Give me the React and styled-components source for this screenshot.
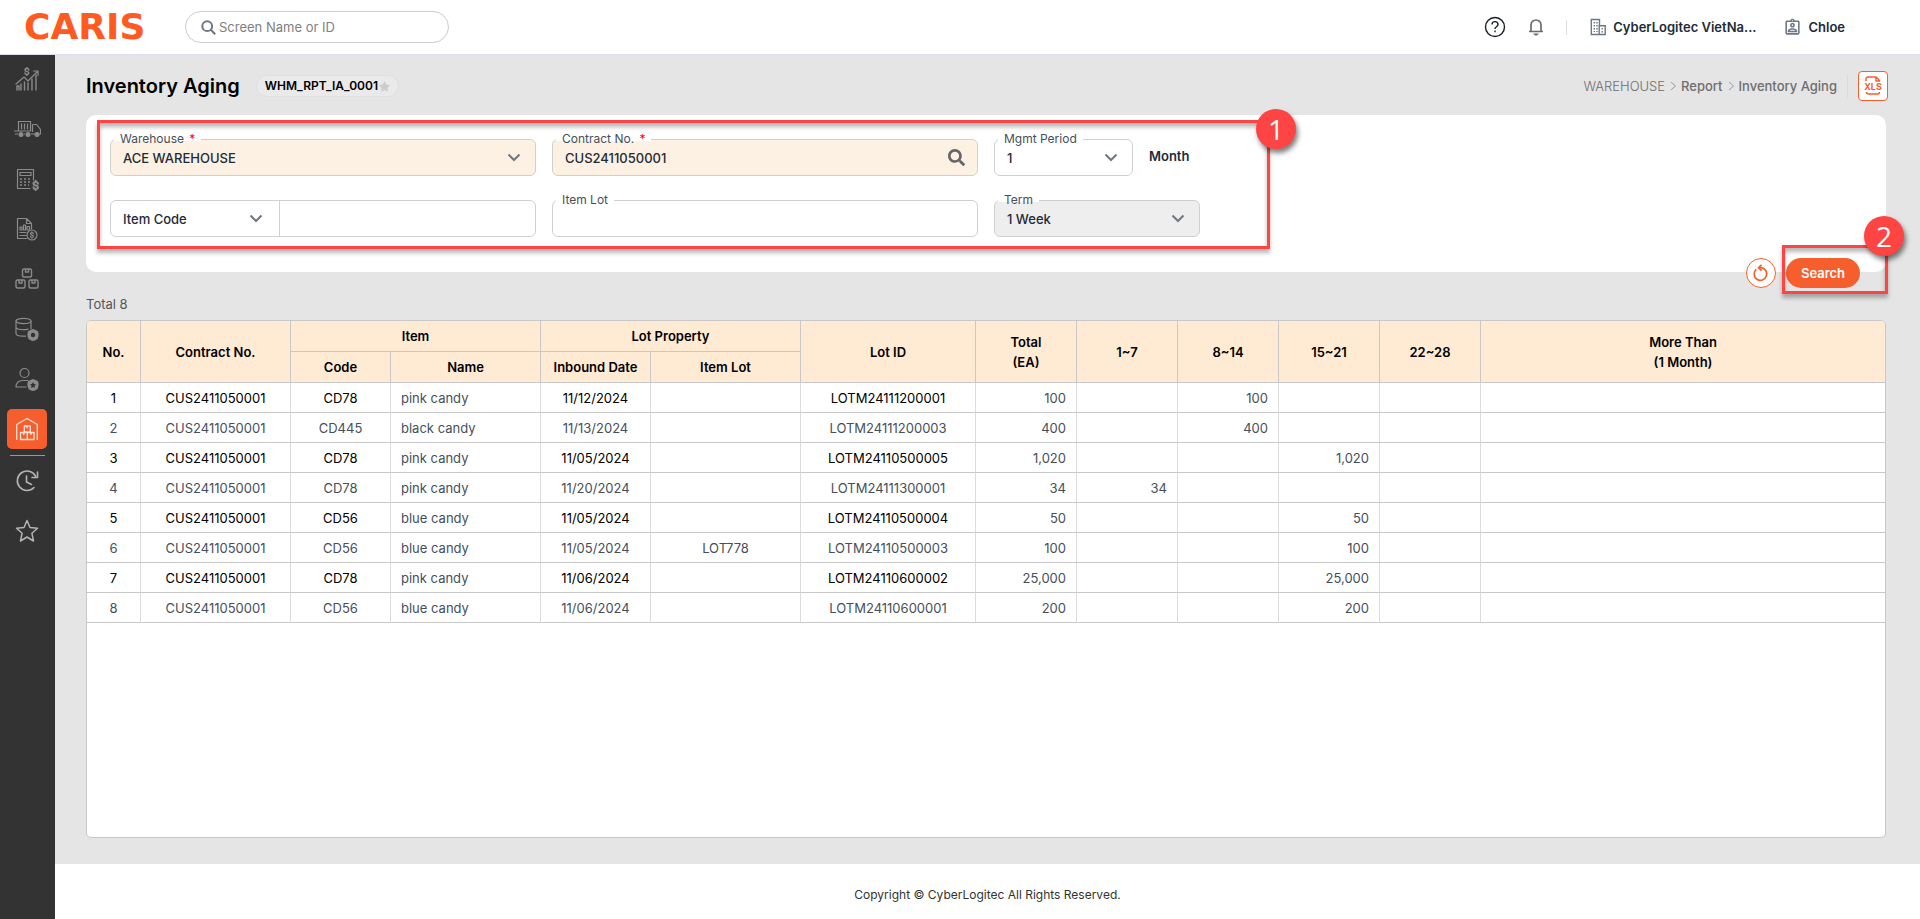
import React from 'react';
import styled, { createGlobalStyle, css } from 'styled-components';
import { FaSearch, FaStar } from 'react-icons/fa';
import { MdOutlineAssignmentInd } from 'react-icons/md';

const GlobalStyle = createGlobalStyle`
  *, *::before, *::after { box-sizing: border-box; }
  body {
    margin: 0;
    background: #fff;
    color: #212b36;
    font-family: Inter, "Liberation Sans", sans-serif;
    font-size: 13px;
    line-height: 16px;
  }
  button, input, select { font: inherit; color: inherit; }
  a { color: inherit; text-decoration: none; }
`;

const Page = styled.div`
  display: flex;
  flex-direction: column;
  min-height: 100vh;
`;

const Header = styled.header`
  display: flex;
  align-items: center;
  height: 55px;
  padding: 0 75px 0 24px;
  border-bottom: 1px solid #dfdfe8;
`;

const Logo = styled.a`
  width: 161px;
  color: #ff5a1f;
  font-family: "DejaVu Sans", sans-serif;
  font-size: 36px;
  font-weight: 700;
  line-height: 32px;
`;

const ScreenSearch = styled.label`
  display: flex;
  align-items: center;
  gap: 3px;
  width: 264px;
  height: 32px;
  padding: 0 15px;
  border: 1px solid #ccc;
  border-radius: 16px;
  color: #6c7884;
  input {
    flex: 1;
    min-width: 0;
    padding: 0;
    border: 0;
    outline: 0;
    background: transparent;
    font-size: 13px;
  }
  input::placeholder { color: #808080; opacity: 1; }
`;

const HeaderTools = styled.div`
  display: flex;
  align-items: center;
  margin-left: auto;
`;

const IconButton = styled.button`
  display: flex;
  padding: 0;
  border: 0;
  background: none;
  margin-right: ${(p) => p.$space || 0}px;
`;

const ToolDivider = styled.span`
  width: 1px;
  height: 15px;
  margin-right: 22px;
  background: #dcdfe4;
`;

const AccountLink = styled.a`
  display: flex;
  align-items: center;
  gap: 6px;
  margin-right: ${(p) => p.$space || 0}px;
  color: #212b36;
  font-size: 13px;
  font-weight: 600;
  white-space: nowrap;
  svg { color: #6c7884; }
`;

const Body = styled.div`
  display: flex;
  flex: 1;
`;

const Sidebar = styled.nav`
  display: flex;
  flex-direction: column;
  align-items: center;
  gap: 10px;
  flex: 0 0 55px;
  padding: 4px 1px 0 0;
  background: #333;
`;

const SideLink = styled.a`
  display: flex;
  align-items: center;
  justify-content: center;
  width: 40px;
  height: 40px;
  border-radius: 5px;
  color: #8b8b8b;
  ${(p) => p.$bright && css`color: #b4b4b4;`}
  ${(p) => p.$active && css`background: #f65f2d; color: #ffe3d6;`}
`;

const SideDivider = styled.hr`
  width: 35px;
  height: 1px;
  margin: -4px 0 -5px;
  border: 0;
  background: #999;
`;

const Column = styled.div`
  display: flex;
  flex-direction: column;
  flex: 1;
  min-width: 0;
`;

const Main = styled.main`
  display: flex;
  flex-direction: column;
  flex: 1;
  padding: 0 34px 26px 31px;
  background: #e5e5e5;
`;

const TitleBar = styled.div`
  display: flex;
  align-items: center;
  height: 60px;
  padding-top: 2px;
`;

const Title = styled.h1`
  margin: 0 16px 0 0;
  color: #000;
  font-size: 20px;
  font-weight: 600;
  line-height: 28px;
`;

const ScreenId = styled.span`
  display: flex;
  align-items: center;
  gap: 1px;
  height: 22px;
  padding: 0 8px;
  border: 1px solid #e0e0e0;
  border-radius: 11px;
  background: #eaeaea;
  color: #000;
  font-size: 12px;
  font-weight: 600;
  svg { color: #ccc; }
`;

const Breadcrumb = styled.nav`
  display: flex;
  align-items: center;
  gap: 4px;
  margin-left: auto;
  padding-right: 10px;
  border-right: 1px solid #d9dae0;
  color: #6e6e6e;
  line-height: 24px;
  a { font-weight: 500; }
  a:first-child { font-weight: 300; }
`;

const ExportButton = styled.button`
  display: flex;
  align-items: center;
  justify-content: center;
  width: 30px;
  height: 30px;
  margin: 0 -2px 0 10px;
  padding: 0;
  border: 1px solid #f65f2d;
  border-radius: 4px;
  background: #fff;
  color: #f65f2d;
`;

const FilterPanel = styled.form`
  position: relative;
  padding: 24px 24px 35px;
  border-radius: 10px;
  background: #fff;
`;

const FilterGrid = styled.div`
  display: grid;
  grid-template-columns: minmax(0, 426px) minmax(0, 426px) auto;
  gap: 24px 16px;
`;

const FieldGroup = styled.div`
  display: flex;
  align-items: center;
  gap: 16px;
`;

const Field = styled.div`
  position: relative;
  display: flex;
  flex: ${(p) => (p.$width ? `0 0 ${p.$width}px` : '1')};
  height: 37px;
  border: 1px solid #d0d0d0;
  border-radius: 6px;
  background: ${(p) => p.$fill || '#fff'};
`;

const FieldLabel = styled.label`
  position: absolute;
  top: -9px;
  left: 3px;
  padding: 0 6px;
  background: linear-gradient(#fff 10px, transparent 10px);
  color: #454f5b;
  font-size: 12px;
  b { margin-left: 2px; color: #f00; font-weight: 400; }
`;

const control = css`
  width: 100%;
  min-width: 0;
  padding: 0 12px;
  border: 0;
  outline: 0;
  background: transparent;
  color: #212b36;
  font-weight: 500;
  opacity: 1;
`;

const TextInput = styled.input`${control}`;

const SelectBox = styled.div`
  position: relative;
  display: flex;
  flex: ${(p) => (p.$width ? `0 0 ${p.$width}px` : '1')};
  border-right: ${(p) => (p.$width ? '1px solid #d0d0d0' : '0')};
  select { ${control} appearance: none; }
  svg {
    position: absolute;
    top: 13px;
    right: ${(p) => (p.$width ? 16 : 14)}px;
    color: #6c7884;
    pointer-events: none;
  }
`;

const LookupButton = styled.button`
  display: flex;
  align-items: center;
  padding: 0 12px;
  border: 0;
  background: none;
  color: #666;
`;

const Unit = styled.span`
  padding-bottom: 4px;
  color: #212b36;
  font-weight: 600;
`;

const Actions = styled.div`
  position: absolute;
  right: 26px;
  bottom: -16px;
  display: flex;
  gap: 10px;
`;

const ResetButton = styled.button`
  display: flex;
  align-items: center;
  justify-content: center;
  width: 30px;
  height: 30px;
  padding: 0;
  border: 1px solid #f65f2d;
  border-radius: 50%;
  background: #fff;
  color: #f65f2d;
`;

const SearchButton = styled.button`
  width: 74px;
  height: 30px;
  padding: 0;
  border: 0;
  border-radius: 15px;
  background: #f65f2d;
  color: #fff;
  font-weight: 600;
`;

const Callout = styled.div`
  position: absolute;
  top: ${(p) => p.$top}px;
  left: ${(p) => p.$left}px;
  width: ${(p) => p.$width}px;
  height: ${(p) => p.$height}px;
  border: 3px solid #ff4444;
  box-shadow: 0 4px 4px rgba(0, 0, 0, 0.28), inset 0 4px 4px rgba(0, 0, 0, 0.28);
  pointer-events: none;
`;

const CalloutNumber = styled.span`
  position: absolute;
  top: ${(p) => p.$top}px;
  right: ${(p) => p.$right}px;
  width: 40px;
  height: 40px;
  border-radius: 50%;
  background: #ff4444;
  box-shadow: 2px 4px 5px rgba(0, 0, 0, 0.5);
  color: #fff;
  font-family: "Open Sans", sans-serif;
  font-size: 28px;
  line-height: 40px;
  text-align: center;
`;

const Total = styled.p`
  margin: 0;
  padding: 24px 0 8px;
  color: #555;
`;

const TableFrame = styled.div`
  flex: 1;
  overflow: hidden;
  border: 1px solid #c8c8c8;
  border-radius: 5px;
  background: #fff;
`;

const Table = styled.table`
  width: 100%;
  table-layout: fixed;
  border-collapse: separate;
  border-spacing: 0;
`;

const HeadCell = styled.th`
  height: 31px;
  padding: 0;
  border-right: 1px solid #c8c8c8;
  border-bottom: 1px solid #c8c8c8;
  background: #ffead3;
  color: #000;
  font-weight: 600;
  line-height: 20px;
  &.last { border-right: 0; }
`;

const Cell = styled.td`
  height: 30px;
  padding: 0 10px;
  border-right: 1px solid #dcdcdc;
  border-bottom: 1px solid #c8c8c8;
  color: ${(p) => (p.$strong ? '#000' : '#454f5b')};
  text-align: ${(p) => p.$align || 'center'};
  &:last-child { border-right: 0; }
`;

const Footer = styled.footer`
  display: flex;
  align-items: center;
  justify-content: center;
  height: 55px;
  padding-top: 6px;
  color: #333;
  font-size: 12px;
`;

const Svg = ({ size = 24, w = 1.2, children }) => (
  <svg width={size} height={size} viewBox="0 0 24 24" fill="none" stroke="currentColor" strokeWidth={w} strokeLinejoin="round" strokeLinecap="round" aria-hidden="true">
    {children}
  </svg>
);

const Chevron = () => (
  <svg width="14" height="9" viewBox="0 0 14 9" fill="none" stroke="currentColor" strokeWidth="2" aria-hidden="true">
    <path d="M1.5 1.5 7 7l5.5-5.5" />
  </svg>
);

const Crumb = () => (
  <svg width="8" height="12" viewBox="0 0 8 12" fill="none" stroke="#999" aria-hidden="true">
    <path d="m2 2 4.5 4L2 10" />
  </svg>
);

const Dollar = ({ x, y, s = 1, w = 1.6 }) => (
  <path transform={`translate(${x} ${y}) scale(${s})`} strokeWidth={w} d="M2 -3.2v-1M2 3.2v1M4 -1.7C4 -3.7 0 -3.7 0 -1.6S4 -.3 4 1.6 0 3.7 0 1.7" />
);

const Gear = ({ x, y, children }) => (
  <g transform={`translate(${x} ${y})`}>
    <path fill="currentColor" stroke="none" d="M0-6 2-5.3 5-3.8 5.7-1 5.3 1.7 4.5 4 2 5.4 0 6-2 5.4-4.5 4-5.3 1.7-5.7-1-5-3.8-2-5.3Z" />
    {children}
  </g>
);

const icons = {
  growth: (
    <Svg>
      <path d="M2 23v-4h2v4M6 23v-6M9.5 23v-8M13 23v-7M17 23V12M21 23V8" strokeWidth="1.4" />
      <path d="M1 17l8-7 4 4 9.5-9.5M18.5 4H23v4.5" />
      <Dollar x={10} y={4.5} s={0.95} />
    </Svg>
  ),
  truck: (
    <svg width="28" height="18" viewBox="0 0 28 18" fill="none" stroke="currentColor" strokeWidth="1.2" aria-hidden="true">
      <path d="M5.5 1.5h12V11h-12zM8.5 3.5v6M11.5 3.5v6M14.5 3.5v6M19.5 4.5h4l4 5V14H26M1 11h4M2 14h3M11 14h1M18 14h4M19.5 4.5V12" />
      <g fill="currentColor"><circle cx="8" cy="14.5" r="1.9" /><circle cx="15" cy="14.5" r="1.9" /><circle cx="24" cy="14.5" r="1.9" /></g>
    </svg>
  ),
  calculator: (
    <Svg>
      <path d="M15 21.5H2.5v-19h16V13M5 5.5h11v3H5z" />
      <path strokeDasharray="2 2" strokeLinecap="butt" strokeWidth="1.7" d="M5 12h11M5 15h11M5 18h9" />
      <Dollar x={18.5} y={18.5} s={1.1} w={1.9} />
    </Svg>
  ),
  report: (
    <Svg>
      <path d="M12 21.5H2.5v-20h9l5 5V12M11.5 1.5v5h5M5 13v-3h2v3zM8.5 13V8h2v5zM12 13V9.5h2.5V13zM5 15.5h6M5 18.5h6" />
      <circle cx="17" cy="18" r="5" />
      <Dollar x={15.4} y={18} s={0.75} />
    </Svg>
  ),
  boxes: (
    <Svg w={1.4}>
      <rect x="7.5" y="2" width="9" height="8" rx="1.5" /><path d="M10.5 2.5V5h3V2.5" />
      <rect x="1" y="13" width="9" height="8" rx="1.5" /><path d="M4 13.5V16h3v-2.5" />
      <rect x="14" y="13" width="9" height="8" rx="1.5" /><path d="M17 13.5V16h3v-2.5" />
    </Svg>
  ),
  database: (
    <Svg>
      <ellipse cx="8.5" cy="4" rx="7.5" ry="2.7" />
      <path d="M1 4v12.5c0 1.5 3 2.7 7.5 2.7h2M16 4v8M1 10c0 1.6 3.5 2.7 7.5 2.7 1.7 0 3.3-.2 4.5-.6" />
      <Gear x={18} y={18}><circle r="2.2" fill="#333" stroke="none" /></Gear>
    </Svg>
  ),
  user: (
    <Svg>
      <circle cx="9.5" cy="6" r="4.5" />
      <path d="M13 13.5H7.5C3.5 13.5 1 16 1 20h10" />
      <Gear x={18} y={18}><path fill="#333" stroke="none" d="m0-3 1 2 2 .2-1.5 1.6.4 2.2L0 2-1.9 3l.4-2.2L-3-.8-1-1Z" /></Gear>
    </Svg>
  ),
  warehouse: (
    <Svg w={1.3}>
      <path strokeLinecap="butt" d="M1.7 23V7.5L12 1.5l10.3 6V23M9.3 9h6v6h-6zM5.5 15.5h6.8v7H5.5zM12.3 15.5H19v7h-6.7zM12 9v2.5M8.7 16v2M16 16v2" />
    </Svg>
  ),
  history: (
    <Svg w={1.6}>
      <path d="M20.5 7A9.7 9.7 0 1 0 19 18.5M22.5 3v5.5H17M11.5 7v6l5 2.5" />
    </Svg>
  ),
  star: (
    <Svg w={1.5}>
      <path d="m12 1.5 3 7 7.5.8-5.6 5 1.6 7.7L12 18l-6.5 4 1.6-7.7-5.6-5L9 8.5z" />
    </Svg>
  ),
};

const sideItems = [
  ['growth', 'Performance'], ['truck', 'Transport'], ['calculator', 'Settlement'], ['report', 'Billing'],
  ['boxes', 'Inventory'], ['database', 'Master data'], ['user', 'Administration'], ['warehouse', 'Warehouse'],
];

const columnWidths = [54, 150, 100, 150, 110, 150, 175, 101, 101, 101, 101, 101, null];

const rows = [
  ['CD78', 'pink candy', '11/12/2024', '', 'LOTM24111200001', '100', '', '100', '', '', ''],
  ['CD445', 'black candy', '11/13/2024', '', 'LOTM24111200003', '400', '', '400', '', '', ''],
  ['CD78', 'pink candy', '11/05/2024', '', 'LOTM24110500005', '1,020', '', '', '1,020', '', ''],
  ['CD78', 'pink candy', '11/20/2024', '', 'LOTM24111300001', '34', '34', '', '', '', ''],
  ['CD56', 'blue candy', '11/05/2024', '', 'LOTM24110500004', '50', '', '', '50', '', ''],
  ['CD56', 'blue candy', '11/05/2024', 'LOT778', 'LOTM24110500003', '100', '', '', '100', '', ''],
  ['CD78', 'pink candy', '11/06/2024', '', 'LOTM24110600002', '25,000', '', '', '25,000', '', ''],
  ['CD56', 'blue candy', '11/06/2024', '', 'LOTM24110600001', '200', '', '', '200', '', ''],
];

const alignOf = (i) => (i === 1 ? 'left' : i > 4 ? 'right' : 'center');

function Filters() {
  return (
    <FilterPanel onSubmit={(e) => e.preventDefault()}>
      <FilterGrid>
        <Field $fill="#fdf1e4">
          <FieldLabel htmlFor="warehouse">Warehouse <b>*</b></FieldLabel>
          <SelectBox><select id="warehouse"><option>ACE WAREHOUSE</option></select><Chevron /></SelectBox>
        </Field>
        <Field $fill="#fdf1e4">
          <FieldLabel htmlFor="contract">Contract No. <b>*</b></FieldLabel>
          <TextInput id="contract" defaultValue="CUS2411050001" />
          <LookupButton type="button" aria-label="Find contract"><FaSearch size={17} /></LookupButton>
        </Field>
        <FieldGroup>
          <Field $width={139}>
            <FieldLabel htmlFor="period">Mgmt Period</FieldLabel>
            <SelectBox><select id="period"><option>1</option></select><Chevron /></SelectBox>
          </Field>
          <Unit>Month</Unit>
        </FieldGroup>
        <Field>
          <SelectBox $width={169}><select aria-label="Item search type"><option>Item Code</option></select><Chevron /></SelectBox>
          <TextInput aria-label="Item" />
        </Field>
        <Field>
          <FieldLabel htmlFor="lot">Item Lot</FieldLabel>
          <TextInput id="lot" />
        </Field>
        <FieldGroup>
          <Field $width={206} $fill="#eee">
            <FieldLabel htmlFor="term">Term</FieldLabel>
            <SelectBox><select id="term" disabled><option>1 Week</option></select><Chevron /></SelectBox>
          </Field>
        </FieldGroup>
      </FilterGrid>
      <Actions>
        <ResetButton type="reset" aria-label="Reset">
          <svg width="18" height="18" viewBox="0 0 18 18" fill="none" stroke="currentColor" strokeWidth="1.7" aria-hidden="true">
            <path d="M4.2 5.3A6.3 6.3 0 1 0 9 3.7H7" /><path d="M9.5.8 6.5 3.7l3 2.9" />
          </svg>
        </ResetButton>
        <SearchButton type="submit">Search</SearchButton>
        <Callout $top={-13} $left={36} $width={106} $height={49}><CalloutNumber $top={-32} $right={-19}>2</CalloutNumber></Callout>
      </Actions>
      <Callout $top={5} $left={11} $width={1173} $height={129}><CalloutNumber $top={-14} $right={-29}>1</CalloutNumber></Callout>
    </FilterPanel>
  );
}

function AgingTable() {
  return (
    <TableFrame>
      <Table>
        <colgroup>{columnWidths.map((w, i) => <col key={i} width={w || undefined} />)}</colgroup>
        <thead>
          <tr>
            <HeadCell rowSpan={2}>No.</HeadCell>
            <HeadCell rowSpan={2}>Contract No.</HeadCell>
            <HeadCell colSpan={2}>Item</HeadCell>
            <HeadCell colSpan={2}>Lot Property</HeadCell>
            <HeadCell rowSpan={2}>Lot ID</HeadCell>
            <HeadCell rowSpan={2}>Total<br />(EA)</HeadCell>
            {['1~7', '8~14', '15~21', '22~28'].map((t) => <HeadCell key={t} rowSpan={2}>{t}</HeadCell>)}
            <HeadCell rowSpan={2} className="last">More Than<br />(1 Month)</HeadCell>
          </tr>
          <tr>{['Code', 'Name', 'Inbound Date', 'Item Lot'].map((t) => <HeadCell key={t}>{t}</HeadCell>)}</tr>
        </thead>
        <tbody>
          {rows.map((row, r) => {
            const odd = r % 2 === 0;
            return (
              <tr key={r}>
                <Cell $strong={odd}>{r + 1}</Cell>
                <Cell $strong={odd}>CUS2411050001</Cell>
                {row.map((v, i) => (
                  <Cell key={i} $align={alignOf(i)} $strong={odd && alignOf(i) === 'center'}>{v}</Cell>
                ))}
              </tr>
            );
          })}
        </tbody>
      </Table>
    </TableFrame>
  );
}

export default function App() {
  return (
    <Page>
      <GlobalStyle />
      <Header>
        <Logo href="#">CARIS</Logo>
        <ScreenSearch>
          <svg width="15" height="15" viewBox="0 0 15 15" fill="none" stroke="currentColor" strokeWidth="2" aria-hidden="true">
            <circle cx="6.2" cy="6.2" r="4.9" /><path d="m9.8 9.8 4.4 4.4" />
          </svg>
          <input placeholder="Screen Name or ID" aria-label="Screen Name or ID" />
        </ScreenSearch>
        <HeaderTools>
          <IconButton aria-label="Help" $space={22}>
            <svg width="22" height="22" viewBox="0 0 22 22" fill="none" stroke="#1b1f2a" strokeWidth="1.4" aria-hidden="true">
              <circle cx="11" cy="11" r="9.5" /><path d="M8 8.5c0-3.8 6-3.8 6 0 0 2.3-3 2.2-3 4.5M11 14.5v1.7" />
            </svg>
          </IconButton>
          <IconButton aria-label="Notifications" $space={22}>
            <svg width="16" height="18" viewBox="0 0 16 18" aria-hidden="true">
              <path d="M3 13V7a5 5 0 0 1 10 0v6M1 13.5h14" fill="none" stroke="#6b6b6b" strokeWidth="1.7" />
              <path d="M5 15.5h6l-2 2H7z" fill="#6b6b6b" />
            </svg>
          </IconButton>
          <ToolDivider />
          <AccountLink href="#" $space={27}>
            <svg width="18" height="18" viewBox="0 0 18 18" fill="none" stroke="currentColor" strokeWidth="1.4" aria-hidden="true">
              <path d="M10.5 7V1.5H2.3v15h13.9V7.8h-6v8.7" />
              <path strokeDasharray="1.5 1.5" d="M5.3 4v10M8 4v10M13.2 10v5" />
            </svg>
            CyberLogitec VietNa...
          </AccountLink>
          <AccountLink href="#"><MdOutlineAssignmentInd size={19} />Chloe</AccountLink>
        </HeaderTools>
      </Header>
      <Body>
        <Sidebar aria-label="Modules">
          {sideItems.map(([key, label]) => (
            <SideLink key={key} href="#" aria-label={label} $active={key === 'warehouse'}>{icons[key]}</SideLink>
          ))}
          <SideDivider />
          <SideLink href="#" aria-label="Recent" $bright>{icons.history}</SideLink>
          <SideLink href="#" aria-label="Favorites" $bright>{icons.star}</SideLink>
        </Sidebar>
        <Column>
          <Main>
            <TitleBar>
              <Title>Inventory Aging</Title>
              <ScreenId>WHM_RPT_IA_0001<FaStar size={11} /></ScreenId>
              <Breadcrumb aria-label="Breadcrumb">
                <a href="#">WAREHOUSE</a><Crumb /><a href="#">Report</a><Crumb /><a href="#">Inventory Aging</a>
              </Breadcrumb>
              <ExportButton aria-label="Export to XLS">
                <svg width="22" height="22" viewBox="0 0 22 22" fill="none" stroke="currentColor" strokeWidth="1.4" aria-hidden="true">
                  <path d="M4 6V4c0-1.3.7-2 2-2h8l4 4M14 2v4h4M4.5 17c0 1.5.7 2 2 2h9c1.3 0 2-.5 2-2" />
                  <text x="11" y="15" textAnchor="middle" fill="currentColor" stroke="none" fontSize="9" fontWeight="700">XLS</text>
                </svg>
              </ExportButton>
            </TitleBar>
            <Filters />
            <Total>Total 8</Total>
            <AgingTable />
          </Main>
          <Footer>Copyright © CyberLogitec All Rights Reserved.</Footer>
        </Column>
      </Body>
    </Page>
  );
}
